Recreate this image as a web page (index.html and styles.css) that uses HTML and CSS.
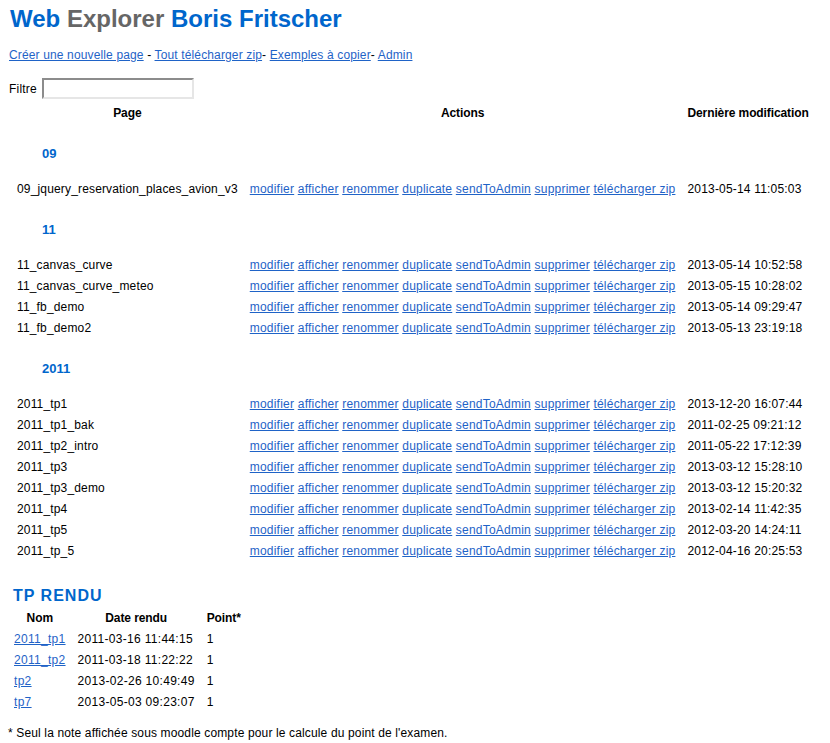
FILE: index.html
```html
<!DOCTYPE html>
<html lang="fr">
<head>
<meta charset="utf-8">
<title>Web Explorer Boris Fritscher</title>
<link rel="stylesheet" href="styles.css">
</head>
<body>
<h1 class="title"><span class="blue">Web</span> <span class="gray">Explorer</span> <span class="blue">Boris Fritscher</span></h1>
<p class="menu"><a href="#">Créer une nouvelle page</a> - <a href="#">Tout télécharger zip</a>- <a href="#">Exemples à copier</a>- <a href="#">Admin</a></p>
<div class="filter"><label for="f">Filtre</label><input id="f" type="text"></div>
<table class="pages">
<thead>
<tr><th>Page</th><th>Actions</th><th>Dernière modification</th></tr>
</thead>
<tbody>
<tr class="group"><td colspan="3"><h3>09</h3></td></tr>
<tr><td>09_jquery_reservation_places_avion_v3</td><td class="actions"><a href="#">modifier</a> <a href="#">afficher</a> <a href="#">renommer</a> <a href="#">duplicate</a> <a href="#">sendToAdmin</a> <a href="#">supprimer</a> <a href="#">télécharger zip</a></td><td>2013-05-14 11:05:03</td></tr>
<tr class="group"><td colspan="3"><h3>11</h3></td></tr>
<tr><td>11_canvas_curve</td><td class="actions"><a href="#">modifier</a> <a href="#">afficher</a> <a href="#">renommer</a> <a href="#">duplicate</a> <a href="#">sendToAdmin</a> <a href="#">supprimer</a> <a href="#">télécharger zip</a></td><td>2013-05-14 10:52:58</td></tr>
<tr><td>11_canvas_curve_meteo</td><td class="actions"><a href="#">modifier</a> <a href="#">afficher</a> <a href="#">renommer</a> <a href="#">duplicate</a> <a href="#">sendToAdmin</a> <a href="#">supprimer</a> <a href="#">télécharger zip</a></td><td>2013-05-15 10:28:02</td></tr>
<tr><td>11_fb_demo</td><td class="actions"><a href="#">modifier</a> <a href="#">afficher</a> <a href="#">renommer</a> <a href="#">duplicate</a> <a href="#">sendToAdmin</a> <a href="#">supprimer</a> <a href="#">télécharger zip</a></td><td>2013-05-14 09:29:47</td></tr>
<tr><td>11_fb_demo2</td><td class="actions"><a href="#">modifier</a> <a href="#">afficher</a> <a href="#">renommer</a> <a href="#">duplicate</a> <a href="#">sendToAdmin</a> <a href="#">supprimer</a> <a href="#">télécharger zip</a></td><td>2013-05-13 23:19:18</td></tr>
<tr class="group"><td colspan="3"><h3>2011</h3></td></tr>
<tr><td>2011_tp1</td><td class="actions"><a href="#">modifier</a> <a href="#">afficher</a> <a href="#">renommer</a> <a href="#">duplicate</a> <a href="#">sendToAdmin</a> <a href="#">supprimer</a> <a href="#">télécharger zip</a></td><td>2013-12-20 16:07:44</td></tr>
<tr><td>2011_tp1_bak</td><td class="actions"><a href="#">modifier</a> <a href="#">afficher</a> <a href="#">renommer</a> <a href="#">duplicate</a> <a href="#">sendToAdmin</a> <a href="#">supprimer</a> <a href="#">télécharger zip</a></td><td>2011-02-25 09:21:12</td></tr>
<tr><td>2011_tp2_intro</td><td class="actions"><a href="#">modifier</a> <a href="#">afficher</a> <a href="#">renommer</a> <a href="#">duplicate</a> <a href="#">sendToAdmin</a> <a href="#">supprimer</a> <a href="#">télécharger zip</a></td><td>2011-05-22 17:12:39</td></tr>
<tr><td>2011_tp3</td><td class="actions"><a href="#">modifier</a> <a href="#">afficher</a> <a href="#">renommer</a> <a href="#">duplicate</a> <a href="#">sendToAdmin</a> <a href="#">supprimer</a> <a href="#">télécharger zip</a></td><td>2013-03-12 15:28:10</td></tr>
<tr><td>2011_tp3_demo</td><td class="actions"><a href="#">modifier</a> <a href="#">afficher</a> <a href="#">renommer</a> <a href="#">duplicate</a> <a href="#">sendToAdmin</a> <a href="#">supprimer</a> <a href="#">télécharger zip</a></td><td>2013-03-12 15:20:32</td></tr>
<tr><td>2011_tp4</td><td class="actions"><a href="#">modifier</a> <a href="#">afficher</a> <a href="#">renommer</a> <a href="#">duplicate</a> <a href="#">sendToAdmin</a> <a href="#">supprimer</a> <a href="#">télécharger zip</a></td><td>2013-02-14 11:42:35</td></tr>
<tr><td>2011_tp5</td><td class="actions"><a href="#">modifier</a> <a href="#">afficher</a> <a href="#">renommer</a> <a href="#">duplicate</a> <a href="#">sendToAdmin</a> <a href="#">supprimer</a> <a href="#">télécharger zip</a></td><td>2012-03-20 14:24:11</td></tr>
<tr><td>2011_tp_5</td><td class="actions"><a href="#">modifier</a> <a href="#">afficher</a> <a href="#">renommer</a> <a href="#">duplicate</a> <a href="#">sendToAdmin</a> <a href="#">supprimer</a> <a href="#">télécharger zip</a></td><td>2012-04-16 20:25:53</td></tr>
</tbody>
</table>
<h2 class="rendu-title">TP RENDU</h2>
<table class="rendu">
<thead>
<tr><th>Nom</th><th>Date rendu</th><th>Point*</th></tr>
</thead>
<tbody>
<tr><td><a href="#">2011_tp1</a></td><td>2011-03-16 11:44:15</td><td>1</td></tr>
<tr><td><a href="#">2011_tp2</a></td><td>2011-03-18 11:22:22</td><td>1</td></tr>
<tr><td><a href="#">tp2</a></td><td>2013-02-26 10:49:49</td><td>1</td></tr>
<tr><td><a href="#">tp7</a></td><td>2013-05-03 09:23:07</td><td>1</td></tr>
</tbody>
</table>
<p class="note">* Seul la note affichée sous moodle compte pour le calcule du point de l'examen.</p>
</body>
</html>
```
FILE: styles.css
```css
html, body {
  margin: 0;
  padding: 0;
  background: #ffffff;
}

body {
  font-family: "Liberation Sans", Arial, sans-serif;
  font-size: 12px;
  line-height: 14px;
  color: #000000;
}

a {
  color: #1f63c7;
  text-decoration: underline;
}

.title {
  margin: 5px 0 0 10px;
  font-size: 24px;
  line-height: 28px;
  font-weight: bold;
}

.blue {
  color: #0066cc;
}

.gray {
  color: #666666;
}

.menu {
  margin: 15px 0 0 9px;
  letter-spacing: 0.14px;
}

.filter {
  display: flex;
  align-items: center;
  gap: 5px;
  margin: 16px 0 0 9px;
  letter-spacing: 0.2px;
}

.filter input {
  box-sizing: border-box;
  width: 152px;
  height: 21px;
  margin: 0;
  padding: 1px 3px;
  border-style: solid;
  border-width: 2px;
  border-color: #8c8c8c #e6e6e6 #e6e6e6 #8c8c8c;
  background: #ffffff;
  font: 12px "Liberation Sans", Arial, sans-serif;
}

.pages {
  margin: 4px 0 0 11px;
  border-collapse: separate;
  border-spacing: 0;
}

.pages th,
.pages td,
.rendu th,
.rendu td {
  padding: 3px 6px;
  line-height: 15px;
  white-space: nowrap;
  vertical-align: top;
}

.pages th,
.rendu th {
  font-weight: bold;
  text-align: center;
  letter-spacing: -0.1px;
}

.pages td {
  text-align: left;
  letter-spacing: 0.19px;
}

.pages td:first-child {
  letter-spacing: 0.16px;
}

.pages td.actions {
  letter-spacing: 0.22px;
}

.rendu td {
  text-align: left;
  letter-spacing: 0.3px;
}

.pages .group td {
  padding: 22px 6px 18px 31px;
}

.pages h3 {
  margin: 0;
  font-size: 13px;
  line-height: 15px;
  font-weight: bold;
  color: #0066cc;
  letter-spacing: 0;
}

.rendu-title {
  margin: 25px 0 0 13px;
  font-size: 16px;
  line-height: 18px;
  font-weight: bold;
  letter-spacing: 1px;
  color: #0066cc;
}

.rendu {
  margin: 3px 0 0 8px;
  border-collapse: separate;
  border-spacing: 0;
}

.note {
  margin: 13px 0 0 8px;
  letter-spacing: 0.14px;
}
```
